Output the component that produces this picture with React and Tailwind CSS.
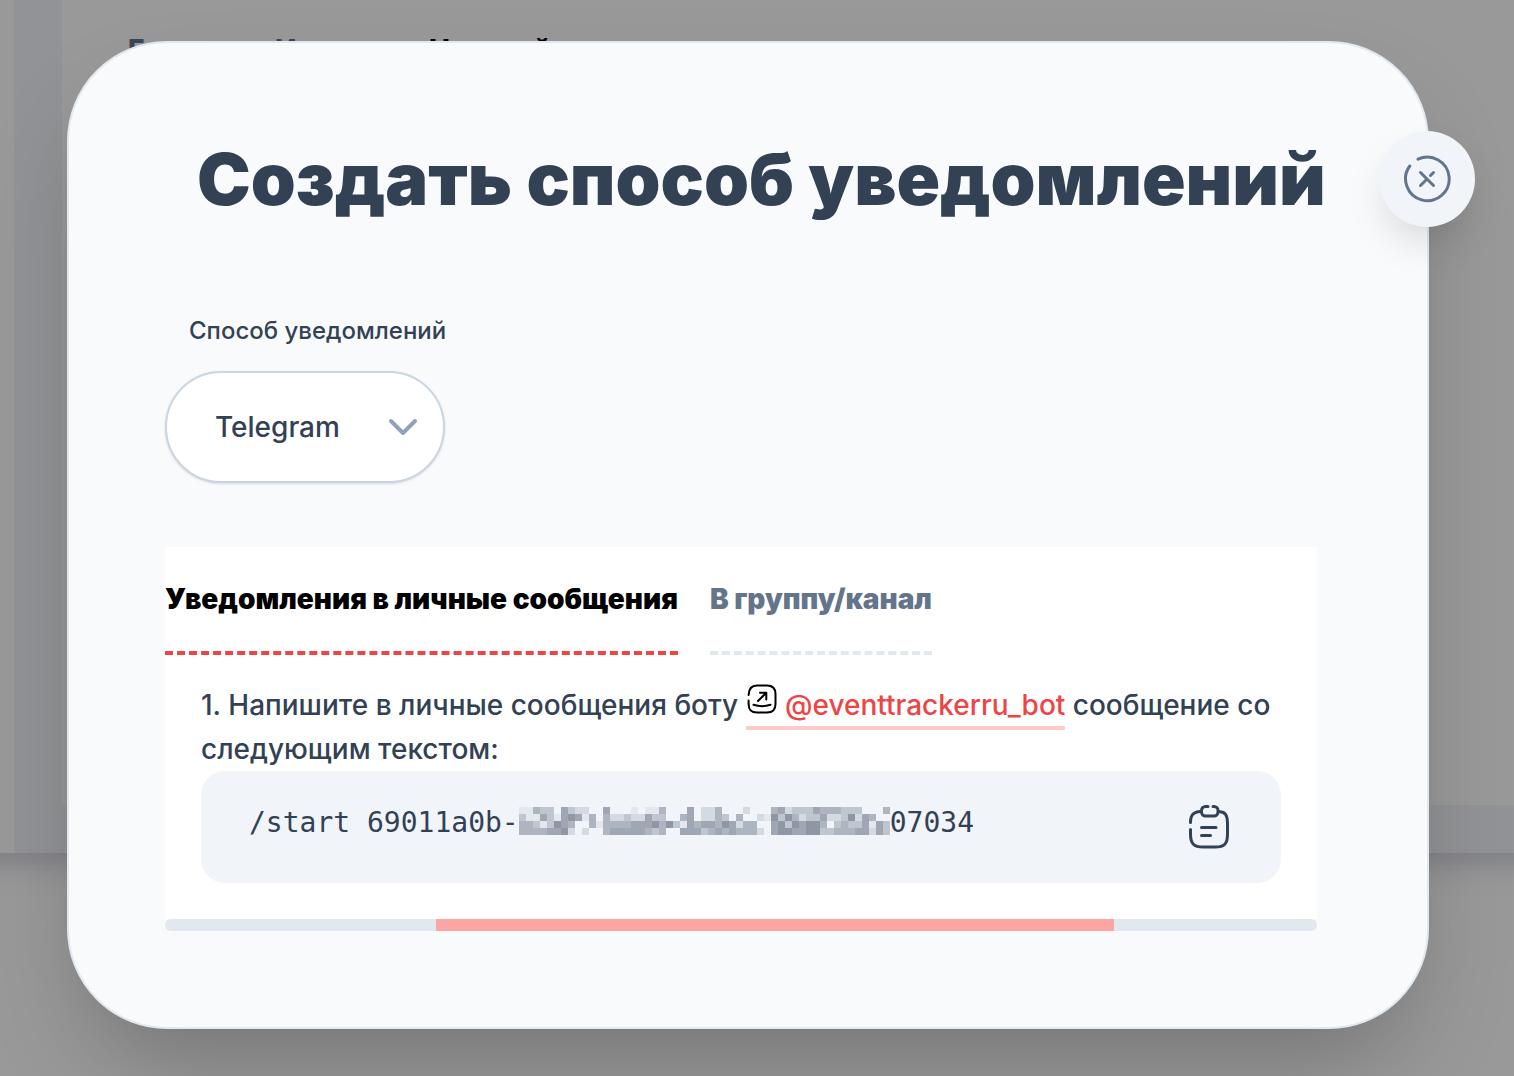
import React, { useState } from 'react';

const MASK_SHADES = [
  'fill-[#f1f4f9]',
  'fill-[#e4e8ee]',
  'fill-[#d5dae2]',
  'fill-[#bfc6d0]',
  'fill-[#adb5c0]',
  'fill-[#a0a7b4]',
  'fill-[#8f97a5]',
];

// one digit per cell, higher is darker
const MASK_ROWS = [
  '11433053220050001011400050224000200045233354443330004',
  '31153156514042232253300450224304002163642335223625400',
  '44313654004144445556463154554652440056365664034335153',
  '44445562020045555543400555345454442056655663344455253',
];

const TABS = [
  { id: 'private', label: 'Уведомления в личные сообщения' },
  { id: 'group', label: 'В группу/канал' },
];

function CloseIcon() {
  return (
    <svg viewBox="0 0 48 48" className="h-12 w-12" fill="none" stroke="currentColor" strokeWidth="3" strokeLinecap="round" aria-hidden="true">
      <path d="M15 4.2A21.8 21.8 0 1 1 6.8 11" />
      <path d="M17.5 17.5L30.5 30.500M30.500 17.500L27.500 20.500M17.500 30.500L23 25" />
    </svg>
  );
}

function LinkIcon() {
  return (
    <svg viewBox="0 0 32 32" className="inline-block h-8 w-8 align-baseline text-black" fill="none" stroke="currentColor" strokeWidth="2" strokeLinecap="round" strokeLinejoin="round" aria-hidden="true">
      <path d="M2.6 12C2.8 6 5 2.500 11 2.500H21C27 2.500 29.500 5 29.500 11V21C29.500 27 27 29.500 21 29.500H11C5 29.500 2.600 27 2.600 21V17.500" />
      <path d="M12 18L20 10M14 9.800H20.300V16.500" />
      <path d="M7.500 21.800Q16 24.600 24.500 21.800" />
    </svg>
  );
}

function ClipboardIcon() {
  return (
    <svg viewBox="0 0 48 48" className="h-12 w-12" fill="none" stroke="currentColor" strokeWidth="3" strokeLinecap="round" strokeLinejoin="round" aria-hidden="true">
      <path d="M15.500 8.500C8.500 9 5.500 11.500 5.500 19.500M5.500 26.500V31C5.500 41 9 44 18 44H30C39.500 44 42.500 41 42.500 31V21C42.500 11.500 40 9 34 8.500" />
      <path d="M23 3.500H20.500A4 4 0 0 0 16.500 7.500V9A4 4 0 0 0 20.500 13H29A4 4 0 0 0 33 9V7.500A4 4 0 0 0 29 3.500H28" />
      <path d="M16.500 24.500H31M16.500 32.500H25.500" />
    </svg>
  );
}

function MaskedPart() {
  return (
    <svg viewBox="0 0 371 28" className="mb-1 h-7 w-[371px] shrink-0" shapeRendering="crispEdges" aria-hidden="true">
      {MASK_ROWS.map((row, y) =>
        row.split('').map((shade, x) => (
          <rect key={`${x}-${y}`} x={x * 7} y={y * 7} width="7" height="7" className={MASK_SHADES[shade]} />
        ))
      )}
    </svg>
  );
}

function PageBackdrop() {
  return (
    <div className="absolute inset-0 overflow-hidden bg-white" aria-hidden="true">
      <div className="-mx-12 h-[853px] bg-white pl-[62px] shadow-[0_6px_32px_rgba(71,75,115,0.3)]">
        <div className="h-full bg-[#f4f6fa] pb-12 pl-12">
          <div className="h-full bg-white pt-7 pl-[66px]">
            <div className="grid grid-cols-[147px_154px_auto] text-[28px] leading-11 font-extrabold text-slate-500">
              <span>Главная</span>
              <span>Импорт</span>
              <span className="text-black">Настройки</span>
            </div>
          </div>
        </div>
      </div>
      <div className="absolute inset-0 bg-black/40" />
    </div>
  );
}

export default function App() {
  const [method, setMethod] = useState('telegram');
  const [tab, setTab] = useState('private');

  return (
    <div className="relative min-h-screen overflow-hidden pt-[41px] pr-[85px] pb-12 pl-[67px] font-['Inter','Noto_Sans',sans-serif] font-medium text-[#334155]">
      <PageBackdrop />

      <div role="dialog" aria-labelledby="dialog-title" className="relative rounded-[100px] border-2 border-slate-200 bg-slate-50 pt-24 pr-[110px] pb-24 pl-24 shadow-[0_50px_100px_-24px_rgba(0,0,0,0.25)]">
        <button
          type="button"
          aria-label="Закрыть"
          className="absolute top-[88px] -right-12 flex h-24 w-24 items-center justify-center rounded-full bg-slate-100 text-[#64748b] shadow-[0_20px_40px_-8px_rgba(0,0,0,0.15)]"
        >
          <CloseIcon />
        </button>

        <h1 id="dialog-title" className="pl-8 text-[72px] leading-20 font-black whitespace-nowrap">
          Создать способ уведомлений
        </h1>

        <div className="mt-24 flex flex-col items-start">
          <label htmlFor="method" className="pl-6 text-2xl leading-8">
            Способ уведомлений
          </label>
          <div className="relative mt-6">
            <select
              id="method"
              value={method}
              onChange={(e) => setMethod(e.target.value)}
              className="h-28 w-[280px] appearance-none rounded-full border-2 border-slate-300 bg-white pr-24 pl-12 text-[28px] shadow-sm"
            >
              <option value="telegram">Telegram</option>
              <option value="email">Email</option>
            </select>
            <svg viewBox="0 0 32 20" className="pointer-events-none absolute top-[46px] right-[26px] h-5 w-8 text-slate-400" fill="none" stroke="currentColor" strokeWidth="4" strokeLinecap="round" strokeLinejoin="round" aria-hidden="true">
              <path d="M4 4L16 16L28 4" />
            </svg>
          </div>
        </div>

        <section className="mt-16">
          <div className="bg-white pb-9">
            <div role="tablist" className="flex gap-8 pt-8">
              {TABS.map(({ id, label }) => (
                <button
                  key={id}
                  type="button"
                  role="tab"
                  aria-selected={tab === id}
                  onClick={() => setTab(id)}
                  className={`border-b-4 border-dashed pb-8 text-[28px] leading-10 font-black ${
                    tab === id ? 'border-[#ef4444] text-black' : 'border-slate-200 text-[#64748b]'
                  }`}
                >
                  {label}
                </button>
              ))}
            </div>

            <div className="px-9 pt-7">
              <p className="text-[28px] leading-[44px]">
                1. Напишите в личные сообщения боту{' '}
                <a href="#bot" className="border-b-4 border-[#fecaca] pb-1 text-[#ef4444]">
                  <LinkIcon /> @eventtrackerru_bot
                </a>{' '}
                сообщение со следующим текстом:
              </p>
              <div className="flex h-28 items-center justify-between rounded-3xl bg-slate-100 px-12">
                <code className="flex items-center pb-2 font-['DejaVu_Sans_Mono',monospace] text-[28px] leading-10 whitespace-pre">
                  /start 69011a0b-
                  <MaskedPart />
                  07034
                </code>
                <button type="button" aria-label="Скопировать">
                  <ClipboardIcon />
                </button>
              </div>
            </div>
          </div>

          <div className="h-3 overflow-hidden rounded-full bg-slate-200">
            <div className="ml-[23.5%] h-full w-[58.9%] bg-[#fca5a5]" />
          </div>
        </section>
      </div>
    </div>
  );
}
